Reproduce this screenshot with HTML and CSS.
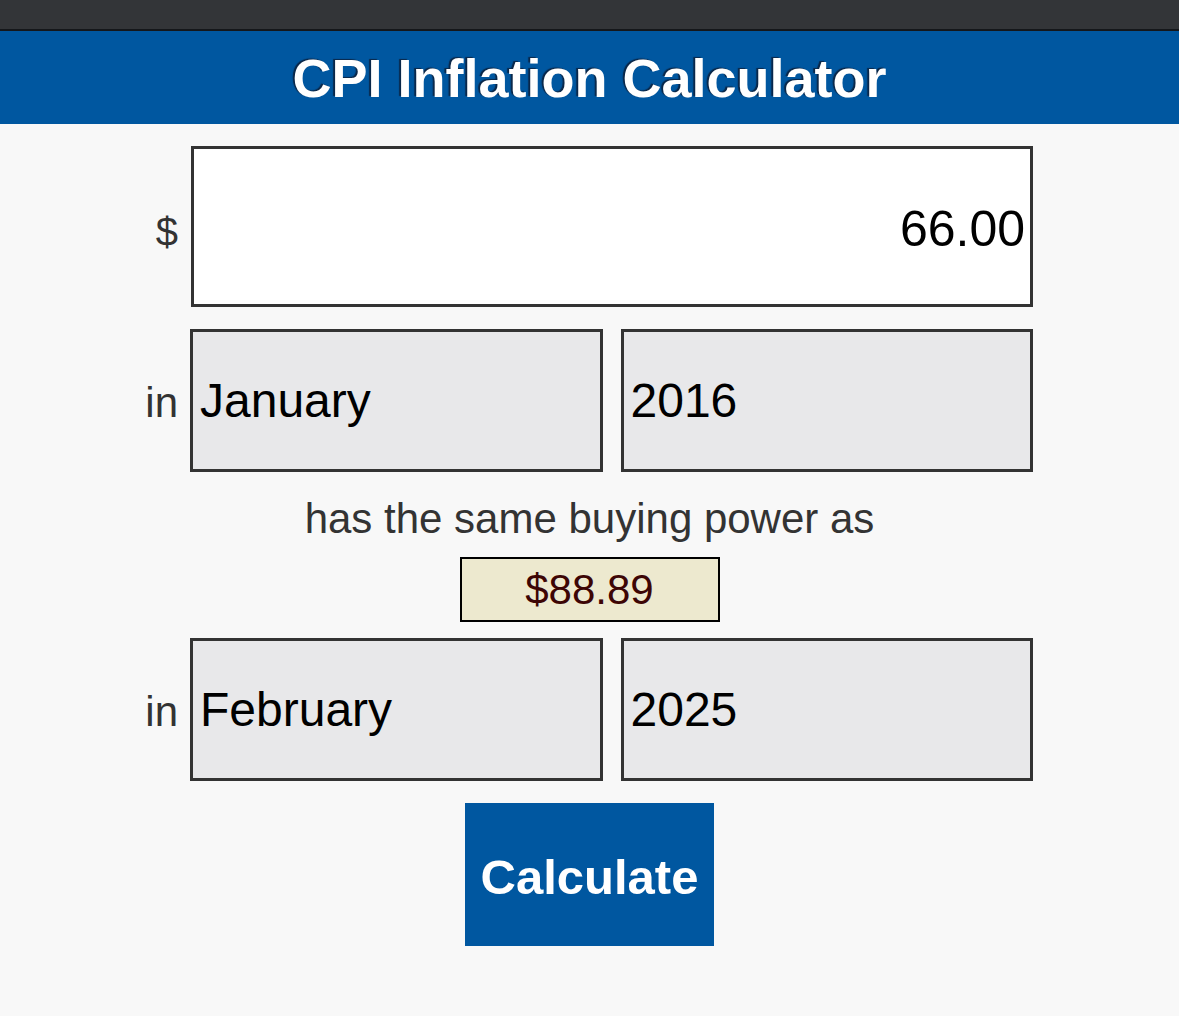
FILE: index.html
```html
<!DOCTYPE html>
<html lang="en">
<head>
<meta charset="utf-8">
<title>CPI Inflation Calculator</title>
<link rel="stylesheet" href="styles.css">
</head>
<body>
<div class="topbar"></div>
<header class="header">
  <h1 class="title">CPI Inflation Calculator</h1>
</header>
<main class="calc">
  <div class="row row-amount">
    <label class="lbl" for="amount">$</label>
    <input id="amount" class="amount" type="text" value="66.00">
  </div>
  <div class="row">
    <span class="lbl">in</span>
    <div class="pair">
      <select class="sel"><option>January</option></select>
      <select class="sel"><option>2016</option></select>
    </div>
  </div>
  <p class="same">has the same buying power as</p>
  <div class="result-wrap"><span class="result">$88.89</span></div>
  <div class="row">
    <span class="lbl">in</span>
    <div class="pair">
      <select class="sel"><option>February</option></select>
      <select class="sel"><option>2025</option></select>
    </div>
  </div>
  <div class="btn-wrap"><button class="btn" type="button">Calculate</button></div>
</main>
</body>
</html>
```
FILE: styles.css
```css
html, body {
  margin: 0;
  padding: 0;
}
body {
  background: #f8f8f8;
  font-family: "Liberation Sans", Arial, sans-serif;
  color: #333;
}
.topbar {
  height: 29px;
  background: #333538;
  border-bottom: 2px solid #15171a;
}
.header {
  background: #0057a0;
  height: 93px;
  display: flex;
  align-items: center;
  justify-content: center;
}
.title {
  margin: 0;
  color: #fff;
  font-size: 54px;
  font-weight: bold;
  line-height: 1;
  padding-top: 0;
  text-shadow: -2px -1px 1px #0a2748;
}
.calc {
  width: 889px;
  margin: 0 auto;
  padding: 22px 0 40px;
  display: flex;
  flex-direction: column;
}
.row {
  display: flex;
  align-items: baseline;
}
.lbl {
  width: 33px;
  margin-right: 12px;
  text-align: right;
  font-size: 42px;
  color: #333;
  flex-shrink: 0;
}
.row-amount .lbl {
  margin-right: 13px;
  font-size: 40px;
}
.amount {
  box-sizing: border-box;
  width: 842px;
  height: 161px;
  border: 3px solid #333;
  border-radius: 0;
  background: #fff;
  font-family: "Liberation Sans", Arial, sans-serif;
  font-size: 50px;
  color: #000;
  text-align: right;
  padding: 4px 5px 0 6px;
  outline: none;
  margin: 0;
}
.row + .row {
  margin-top: 22px;
}
.pair {
  width: 843px;
  display: flex;
  gap: 18px;
}
.sel {
  -webkit-appearance: none;
  appearance: none;
  box-sizing: border-box;
  flex: 1 1 0;
  min-width: 0;
  height: 143px;
  border: 3px solid #333;
  border-radius: 0;
  background: #e8e8ea;
  font-family: "Liberation Sans", Arial, sans-serif;
  font-size: 48px;
  color: #000;
  padding: 0 7px;
  margin: 0;
  outline: none;
}
.same {
  margin: 23px 0 0;
  text-align: center;
  font-size: 42px;
  color: #333;
}
.result-wrap {
  display: flex;
  justify-content: center;
  margin-top: 14px;
  margin-bottom: 16px;
}
.result {
  box-sizing: border-box;
  width: 260px;
  height: 65px;
  border: 2px solid #000;
  background: #ede9cf;
  color: #3d0505;
  font-size: 42px;
  display: flex;
  align-items: center;
  justify-content: center;
}
.btn-wrap {
  display: flex;
  justify-content: center;
  margin-top: 22px;
}
.btn {
  width: 249px;
  height: 143px;
  border: none;
  border-radius: 0;
  background: #0057a0;
  color: #fff;
  font-family: "Liberation Sans", Arial, sans-serif;
  font-size: 49px;
  font-weight: bold;
  padding: 5px 0 0;
}
```
